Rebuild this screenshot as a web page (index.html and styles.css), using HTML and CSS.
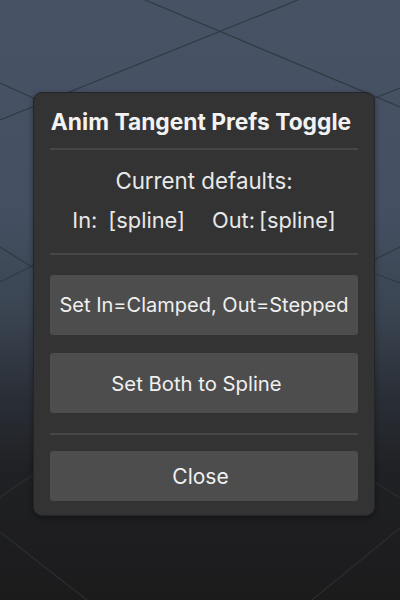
FILE: index.html
```html
<!DOCTYPE html>
<html lang="en">
<head>
<meta charset="utf-8">
<title>Anim Tangent Prefs Toggle</title>
<link rel="stylesheet" href="styles.css">
</head>
<body>
<svg class="grid" width="400" height="600" viewBox="0 0 400 600" aria-hidden="true">
  <g class="grid-top">
    <line x1="145" y1="0" x2="400" y2="107"/>
    <line x1="298" y1="0" x2="0" y2="120"/>
    <line x1="0" y1="83" x2="40" y2="101"/>
    <line x1="370" y1="100" x2="400" y2="88"/>
    <line x1="0" y1="247" x2="40" y2="272"/>
    <line x1="0" y1="282" x2="40" y2="262"/>
    <line x1="370" y1="262" x2="400" y2="247"/>
    <line x1="370" y1="272" x2="400" y2="283"/>
  </g>
  <g class="grid-bottom">
    <line x1="0" y1="497" x2="40" y2="470"/>
    <line x1="0" y1="532" x2="87" y2="600"/>
    <line x1="370" y1="479" x2="400" y2="498"/>
    <line x1="400" y1="528" x2="312" y2="600"/>
  </g>
</svg>
<main class="panel">
  <h1 class="title">Anim Tangent Prefs Toggle</h1>
  <hr class="divider">
  <p class="label">Current defaults:</p>
  <p class="status">
    <span class="key">In:</span><span class="val val-in">[spline]</span>
    <span class="key key-out">Out:</span><span class="val">[spline]</span>
  </p>
  <hr class="divider divider-2">
  <button class="btn btn-tall">Set In=Clamped, Out=Stepped</button>
  <button class="btn btn-tall btn-second">Set Both to Spline</button>
  <hr class="divider divider-3">
  <button class="btn btn-close">Close</button>
</main>
</body>
</html>
```
FILE: styles.css
```css
html, body {
  margin: 0;
  padding: 0;
}
body {
  width: 400px;
  height: 600px;
  overflow: hidden;
  position: relative;
  font-family: Inter, "Noto Sans", "Liberation Sans", sans-serif;
  background: linear-gradient(180deg, #475364 0%, #445062 35%, #3a4451 52%, #2a2f37 66%, #202124 78%, #1b1b1c 100%);
}
.grid {
  position: absolute;
  left: 0;
  top: 0;
  z-index: 0;
}
.grid-top line {
  stroke: #323a45;
  stroke-width: 1.3;
}
.grid-bottom line {
  stroke: #2c2d30;
  stroke-width: 1.2;
}
.panel {
  position: relative;
  z-index: 1;
  box-sizing: border-box;
  width: 342px;
  margin: 92px 0 0 33px;
  padding: 15px 16px 14px 16px;
  background: #333333;
  border: 1px solid #232628;
  border-radius: 9px;
  box-shadow: 0 2px 6px rgba(0, 0, 0, 0.35);
  display: flex;
  flex-direction: column;
}
.title {
  margin: 0;
  padding-right: 6px;
  font-size: 22.8px;
  line-height: 28px;
  font-weight: 700;
  color: #f2f2f2;
  text-align: center;
  white-space: nowrap;
}
.divider {
  border: 0;
  height: 2px;
  background: #464646;
  margin: 12px 0 0 0;
}
.label {
  margin: 18px 0 0 0;
  font-size: 22.3px;
  line-height: 26px;
  color: #e8e8e8;
  text-align: center;
}
.status {
  margin: 13px 0 0 0;
  font-size: 21.8px;
  line-height: 26px;
  color: #e8e8e8;
  display: flex;
  justify-content: center;
  white-space: nowrap;
}
.val-in {
  margin-left: 11px;
}
.key-out {
  margin-left: 27px;
  margin-right: 4px;
}
.divider-2 {
  margin-top: 20px;
}
.btn {
  font-family: inherit;
  border: 0;
  border-radius: 3px;
  background: #4d4d4d;
  color: #f0f0f0;
  font-size: 20px;
  padding: 0;
  text-align: center;
  white-space: nowrap;
}
.btn-tall {
  height: 60px;
  margin-top: 20px;
}
.btn-second {
  margin-top: 18px;
  padding-right: 15px;
  font-size: 20.3px;
}
.divider-3 {
  margin-top: 20px;
}
.btn-close {
  height: 50px;
  margin-top: 16px;
  padding-right: 7px;
  font-size: 21px;
}
```
